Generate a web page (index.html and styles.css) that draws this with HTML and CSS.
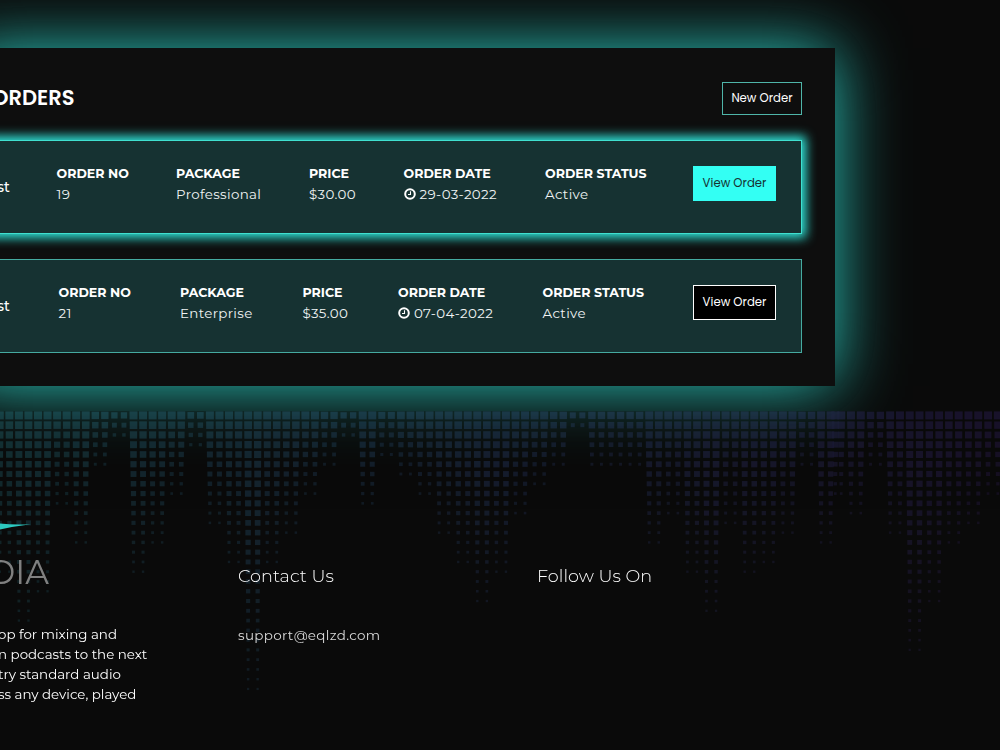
FILE: index.html
```html
<!DOCTYPE html>
<html lang="en">
<head>
    <meta charset="UTF-8">
    <meta name="viewport" content="width=device-width, initial-scale=1.0">
    <title>Orders</title>
    <link rel="stylesheet" href="styles.css">
</head>
<body>
    <main class="panel">
        <div class="panel-header">
            <h1>ORDERS</h1>
            <button class="btn btn-new">New Order</button>
        </div>

        <div class="order order-selected">
            <div class="order-name">st</div>
            <div class="cell"><strong>ORDER NO</strong><span>19</span></div>
            <div class="cell"><strong>PACKAGE</strong><span>Professional</span></div>
            <div class="cell"><strong>PRICE</strong><span>$30.00</span></div>
            <div class="cell">
                <strong>ORDER DATE</strong>
                <span class="date"><svg class="clock" viewBox="0 0 12 12"><circle cx="6" cy="6" r="4.8"/><path d="M6.5 3.2v3.3H4"/></svg>29-03-2022</span>
            </div>
            <div class="cell"><strong>ORDER STATUS</strong><span>Active</span></div>
            <button class="btn btn-view">View Order</button>
        </div>

        <div class="order">
            <div class="order-name">st</div>
            <div class="cell"><strong>ORDER NO</strong><span>21</span></div>
            <div class="cell"><strong>PACKAGE</strong><span>Enterprise</span></div>
            <div class="cell"><strong>PRICE</strong><span>$35.00</span></div>
            <div class="cell">
                <strong>ORDER DATE</strong>
                <span class="date"><svg class="clock" viewBox="0 0 12 12"><circle cx="6" cy="6" r="4.8"/><path d="M6.5 3.2v3.3H4"/></svg>07-04-2022</span>
            </div>
            <div class="cell"><strong>ORDER STATUS</strong><span>Active</span></div>
            <button class="btn btn-view">View Order</button>
        </div>
    </main>

    <footer class="footer">
        <canvas id="dots" class="dots" width="1000" height="340"></canvas>
        <div class="about">
            <svg class="swoosh" viewBox="0 0 32 10"><path d="M0 2.6 Q14 4 31 3.2 Q14 5.2 0 8.6Z"/></svg>
            <div class="logo">DIA</div>
            <p>op for mixing and<br>n podcasts to the next<br>try standard audio<br>ss any device, played</p>
        </div>
        <div class="contact">
            <h2>Contact Us</h2>
            <a>support@eqlzd.com</a>
        </div>
        <div class="follow">
            <h2>Follow Us On</h2>
        </div>
    </footer>

    <script src="dots.js"></script>
</body>
</html>
```
FILE: styles.css
```css
* {
    margin: 0;
    padding: 0;
    box-sizing: border-box;
}

body {
    font-family: 'Montserrat', 'Inter', sans-serif;
    background: #0a0a0a;
    color: #fff;
    width: 1000px;
    height: 750px;
    padding-top: 48px;
    overflow: hidden;
}

.panel {
    width: 875px;
    height: 338px;
    margin-left: -40px;
    padding: 34px 33px 0 0;
    background: #0e0e0e;
    box-shadow: 0 0 64px rgba(45, 212, 200, 0.95);
}

.panel-header {
    display: flex;
    justify-content: space-between;
    align-items: flex-start;
    height: 57.5px;
    padding-left: 32px;
}

h1 {
    font-family: 'Poppins', 'Inter', sans-serif;
    font-size: 21px;
    font-weight: 600;
    line-height: 31px;
}

.btn {
    font-family: 'Poppins', 'Inter', sans-serif;
    font-size: 11.7px;
    color: #fff;
    white-space: nowrap;
}

.btn-new {
    width: 80px;
    height: 33px;
    padding-bottom: 1px;
    background: #0e0e0e;
    border: 1px solid #4fb5a9;
}

.btn-view {
    width: 83px;
    height: 35px;
    padding-top: 1px;
    background: #000;
    border: 1px solid #fff;
}

.order {
    display: grid;
    grid-template-columns: 57.5px 121.5px 122.5px 95.5px 144.5px 150.5px 83px;
    align-items: start;
    height: 94px;
    margin-bottom: 25px;
    padding: 25px 0 0 40px;
    background: #163232;
    border: 1px solid #45aaa0;
}

.order-selected {
    grid-template-columns: 55.5px 119.5px 133px 94.5px 141.5px 148px 83px;
    border-color: #40e0d0;
    box-shadow: 0 0 10px 4px #30e6da;
}

.order-selected .btn-view {
    background: #33fff3;
    border-color: #33fff3;
    color: #163232;
}

.order-name {
    margin: 11px 0 0 -4px;
    font-size: 14px;
    font-weight: 500;
    line-height: 20px;
}

.cell {
    display: flex;
    flex-direction: column;
    margin-top: -3px;
    line-height: 21px;
    white-space: nowrap;
}

.cell span {
    font-size: 13.4px;
    letter-spacing: 0.35px;
    color: #f0f4f4;
}

.cell strong {
    font-size: 12.6px;
    font-weight: 700;
}

.date {
    display: flex;
    align-items: center;
}

.clock {
    width: 12px;
    height: 12px;
    margin-right: 4px;
    fill: none;
    stroke: #fff;
    stroke-width: 2;
}

.clock path {
    stroke-width: 1.1;
}

.footer {
    position: relative;
    display: grid;
    grid-template-columns: 238px 299px 1fr;
    height: 340px;
    margin-top: 24.5px;
    background: rgba(10, 10, 10, 0.3);
}

.dots {
    position: absolute;
    top: 0;
    left: 0;
    mix-blend-mode: screen;
}

.about,
.contact,
.follow {
    position: relative;
}

.about {
    padding-top: 110px;
}

.swoosh {
    display: block;
    width: 32px;
    height: 10px;
    fill: #2cc9c0;
}

.logo {
    margin: 21px 0 0 -12px;
    font-size: 33px;
    font-weight: 400;
    line-height: 40px;
    color: #808080;
}

.about p {
    margin: 32px 0 0 -2px;
    font-size: 13.4px;
    line-height: 20px;
    white-space: nowrap;
}

.contact,
.follow {
    padding-top: 152px;
}

h2 {
    font-size: 17.6px;
    font-weight: 300;
    line-height: 26px;
    letter-spacing: 0.05px;
}

.contact a {
    display: block;
    margin-top: 36px;
    font-size: 13.5px;
    letter-spacing: 0.3px;
    line-height: 20px;
    color: #dcdcdc;
}
```
FILE: dots.js
```javascript
// Equalizer dots: columns come in pairs, each number is the rows in a pair
const first = [17, 22, 19, 10, 14, 6, 3, 17, 14, 9, 4, 12, 16, 29, 16, 13, 9, 6,
    3, 10, 5, 7, 9, 13, 16, 20, 17, 11, 8, 6, 2, 6, 6, 6, 14, 11, 17, 21, 12, 17,
    16, 13, 6, 14];
const second = [9, 11, 6, 13, 25, 20, 14, 12, 9];

const ctx = document.getElementById('dots').getContext('2d');

function drawColumn(x, rows) {
    const top = Math.min(8, 5.3 + rows * 0.35);
    const t = x / 1000;
    const color = t < 0.5
        ? [12 + 6 * t, 44 - 36 * t, 50 - 4 * t]
        : [15 + 8 * (t - 0.5), 26 - 32 * (t - 0.5), 48 - 16 * (t - 0.5)];

    for (let row = 0; row < rows; row++) {
        const size = top - (top - 2) * row / rows;
        const alpha = 0.85 - 0.35 * row / rows;
        ctx.fillStyle = `rgba(${color.map(Math.round).join(',')},${alpha})`;
        ctx.fillRect(x - size / 2, 4.4 + row * 9.77 - size / 2, size, size);
    }
}

first.forEach((rows, i) => {
    drawColumn(-0.2 + i * 19.1, rows);
    drawColumn(9.35 + i * 19.1, rows);
});

second.forEach((rows, i) => {
    drawColumn((i ? 831.4 : 835.3) + i * 19.58, rows);
    drawColumn(841.2 + i * 19.58, rows);
});
```
